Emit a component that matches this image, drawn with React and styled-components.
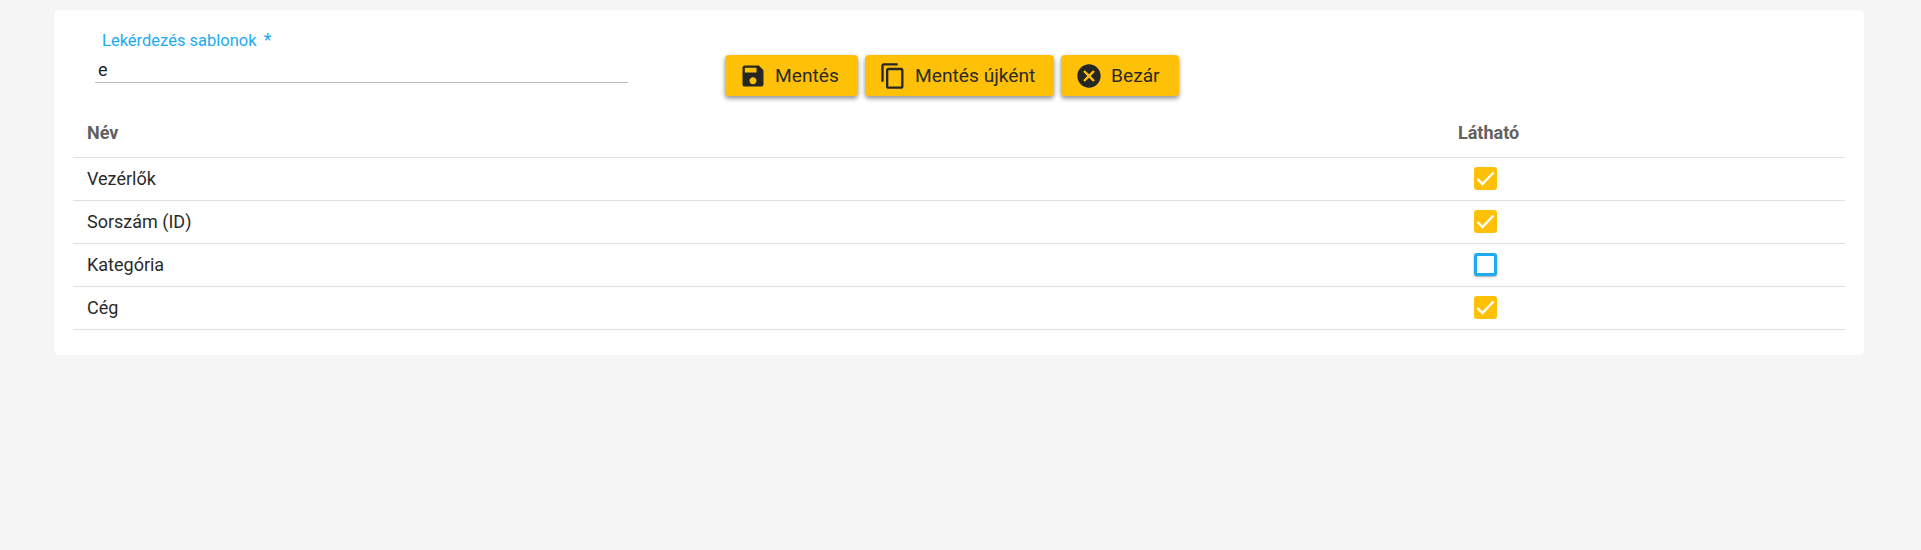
import React from "react";
import styled, { createGlobalStyle } from "styled-components";

const Global = createGlobalStyle`
  html, body { margin: 0; padding: 0; background: #fff; }
  body { font-family: Roboto, "Liberation Sans", sans-serif; }
  * { box-sizing: border-box; }
`;

const Page = styled.div`
  width: 1921px;
  height: 550px;
  background: #f5f5f5;
  padding: 10px 0 0 54px;
`;

const Card = styled.section`
  width: 1810px;
  height: 345px;
  background: #fff;
  border-radius: 5px;
  padding: 0 19px;
`;

const FormRow = styled.div`
  display: flex;
  height: 102px;
`;

const Field = styled.div`
  width: 533px;
  margin: 0 97px 0 22px;
  padding-top: 20px;
`;

const Label = styled.label`
  display: block;
  height: 20px;
  padding-left: 7px;
  font-size: 16.5px;
  line-height: 20px;
  color: #1eaaf1;
  span { margin-left: 3px; font-size: 18px; }
`;

const TextInput = styled.div`
  height: 33px;
  border-bottom: 1px solid #bdbdbd;
  padding: 8px 0 0 3px;
  font-size: 18px;
  line-height: 24px;
  color: #212121;
`;

const Actions = styled.div`
  display: flex;
  gap: 7px;
  padding-top: 45px;
`;

const ActionButton = styled.button`
  display: flex;
  align-items: center;
  gap: 8px;
  height: 41px;
  width: ${(p) => p.$width}px;
  padding: 0 0 0 14px;
  border: 0;
  border-radius: 4px;
  background: #ffc107;
  color: #2b2b2b;
  font-family: inherit;
  font-size: 19.2px;
  white-space: nowrap;
  box-shadow: 0 3px 4px rgba(0, 0, 0, 0.32), 0 1px 5px rgba(0, 0, 0, 0.14);
  svg { flex: none; fill: #262626; }
`;

const Row = styled.div`
  display: grid;
  grid-template-columns: 1385px 1fr;
  align-items: center;
  height: 43px;
  padding-bottom: 2px;
  border-bottom: 1px solid #e0e0e0;
`;

const HeadRow = styled(Row)`
  height: 46px;
  padding-bottom: 5px;
`;

const HeadCell = styled.div`
  padding-left: 14px;
  font-size: 18px;
  font-weight: 700;
  color: #616161;
`;

const VisibleHead = styled(HeadCell)`
  padding-left: 0;
`;

const Cell = styled.div`
  padding-left: 14px;
  font-size: 18px;
  color: #2b2b2b;
`;

const Box = styled.div`
  display: flex;
  align-items: center;
  justify-content: center;
  width: 23px;
  height: 23px;
  margin-left: 16px;
  border-radius: 3px;
  background: ${(p) => (p.$on ? "#ffc107" : "#fff")};
  border: ${(p) => (p.$on ? "0" : "3px solid #1eaaf1")};
  box-shadow: ${(p) => (p.$on ? "none" : "0 1px 2px rgba(0,0,0,.35)")};
`;

const Check = () => (
  <svg width="19" height="15" viewBox="0 0 19 15" fill="none" stroke="#fff" strokeWidth="2.4">
    <path d="M1.5 8 6.5 13 17.5 1.5" />
  </svg>
);

const rows = [
  ["Vezérlők", true],
  ["Sorszám (ID)", true],
  ["Kategória", false],
  ["Cég", true],
];

export default function App() {
  return (
    <Page>
      <Global />
      <Card>
        <FormRow>
          <Field>
            <Label>Lekérdezés sablonok <span>*</span></Label>
            <TextInput>e</TextInput>
          </Field>
          <Actions>
            <ActionButton $width={133}>
              <svg width="28" height="28" viewBox="0 0 24 24">
                <path d="M17 3H5c-1.11 0-2 .9-2 2v14c0 1.1.89 2 2 2h14c1.1 0 2-.9 2-2V7l-4-4zm-5 16c-1.66 0-3-1.34-3-3s1.34-3 3-3 3 1.34 3 3-1.34 3-3 3zm3-10H5V5h10v4z" />
              </svg>
              Mentés
            </ActionButton>
            <ActionButton $width={189}>
              <svg width="28" height="28" viewBox="0 0 24 24">
                <path d="M16 1H4c-1.1 0-2 .9-2 2v14h2V3h12V1zm3 4H8c-1.1 0-2 .9-2 2v14c0 1.1.9 2 2 2h11c1.1 0 2-.9 2-2V7c0-1.1-.9-2-2-2zm0 16H8V7h11v14z" />
              </svg>
              Mentés újként
            </ActionButton>
            <ActionButton $width={118}>
              <svg width="28" height="28" viewBox="0 0 24 24">
                <path d="M12 2C6.47 2 2 6.47 2 12s4.47 10 10 10 10-4.47 10-10S17.53 2 12 2zm5 13.59L15.59 17 12 13.41 8.41 17 7 15.59 10.59 12 7 8.41 8.41 7 12 10.59 15.59 7 17 8.41 13.41 12 17 15.59z" />
              </svg>
              Bezár
            </ActionButton>
          </Actions>
        </FormRow>
        <div>
          <HeadRow>
            <HeadCell>Név</HeadCell>
            <VisibleHead>Látható</VisibleHead>
          </HeadRow>
          {rows.map(([name, on]) => (
            <Row key={name}>
              <Cell>{name}</Cell>
              <Box $on={on}>{on && <Check />}</Box>
            </Row>
          ))}
        </div>
      </Card>
    </Page>
  );
}
